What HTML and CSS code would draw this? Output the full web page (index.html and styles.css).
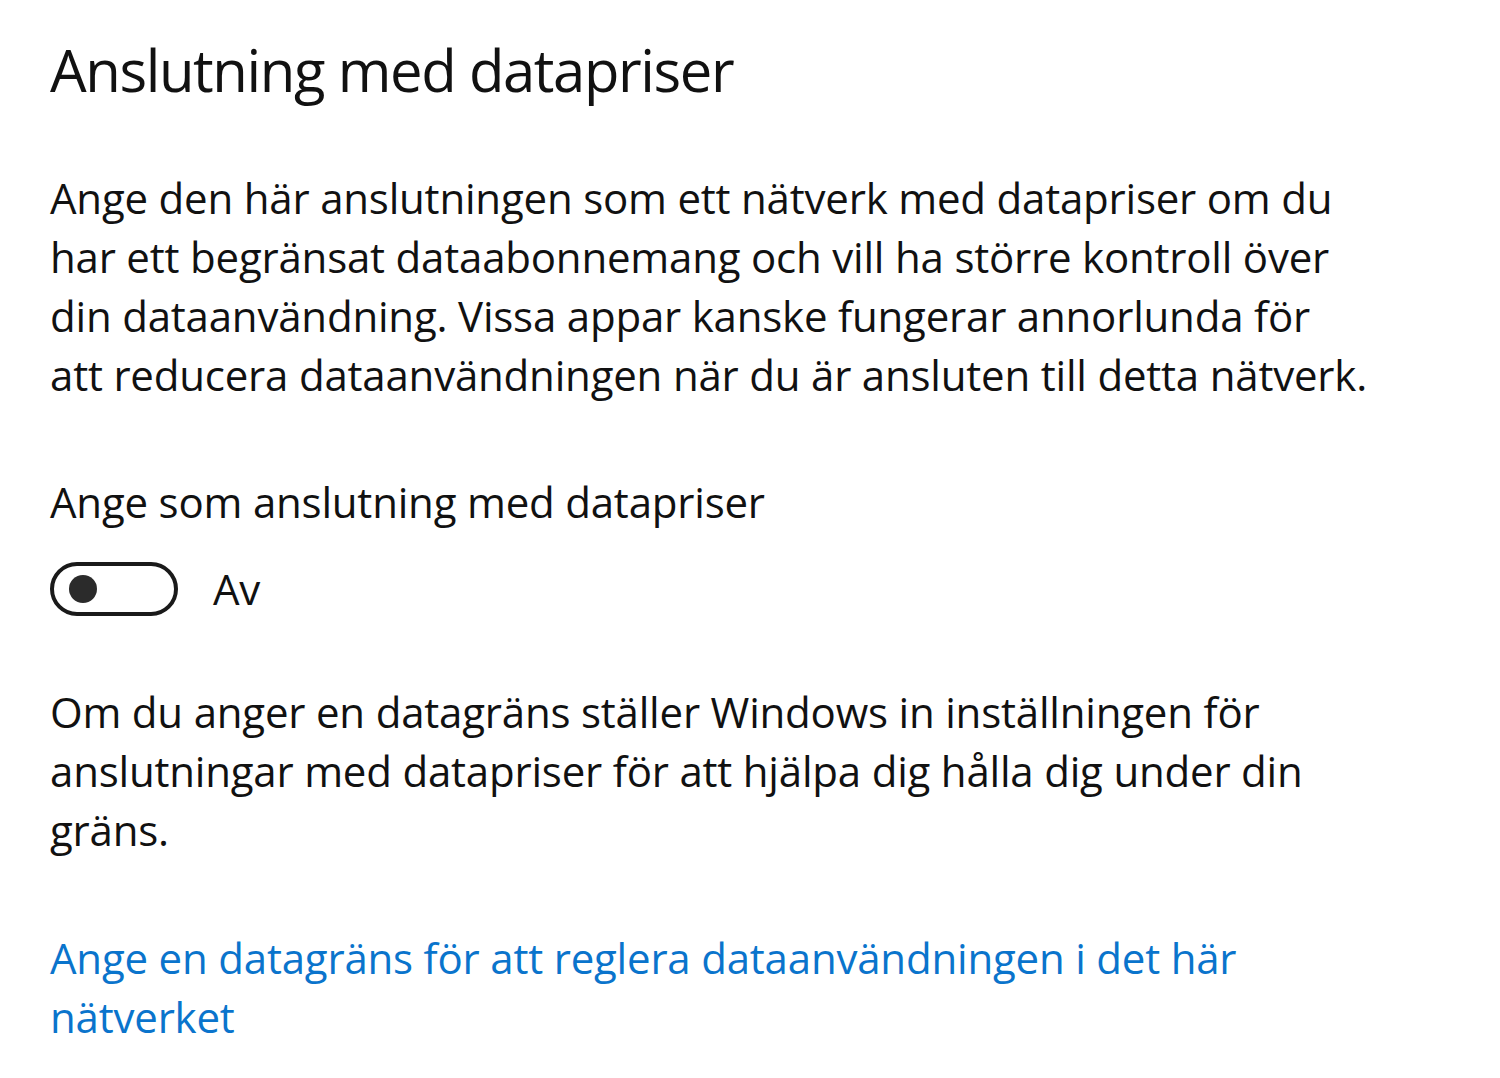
FILE: index.html
```html
<!DOCTYPE html>
<html lang="sv">
<head>
<meta charset="utf-8">
<title>Anslutning med datapriser</title>
<link rel="stylesheet" href="styles.css">
</head>
<body>
<main class="page">
  <h1 class="title">Anslutning med datapriser</h1>
  <p class="text intro">Ange den här anslutningen som ett nätverk med datapriser om du<br>har ett begränsat dataabonnemang och vill ha större kontroll över<br>din dataanvändning. Vissa appar kanske fungerar annorlunda för<br>att reducera dataanvändningen när du är ansluten till detta nätverk.</p>
  <div class="text label">Ange som anslutning med datapriser</div>
  <div class="toggle-row">
    <span class="toggle" role="switch" aria-checked="false"><span class="knob"></span></span>
    <span class="text state">Av</span>
  </div>
  <p class="text note">Om du anger en datagräns ställer Windows in inställningen för<br>anslutningar med datapriser för att hjälpa dig hålla dig under din<br>gräns.</p>
  <a class="text link" href="#">Ange en datagräns för att reglera dataanvändningen i det här<br>nätverket</a>
</main>
</body>
</html>
```

FILE: styles.css
```css
html, body {
  margin: 0;
  padding: 0;
  background: #ffffff;
}

.page {
  padding: 35px 0 0 50px;
  font-family: "Open Sans", "Noto Sans", sans-serif;
  color: #111111;
}

.title {
  margin: 0;
  font-size: 58px;
  line-height: 70px;
  font-weight: 400;
  letter-spacing: -1.4px;
}

.text {
  font-size: 42px;
  line-height: 59px;
  font-weight: 400;
  letter-spacing: -0.2px;
  white-space: nowrap;
}

.intro {
  margin: 63px 0 0;
}

.label {
  margin-top: 68px;
}

.toggle-row {
  display: flex;
  align-items: center;
  gap: 35px;
  margin-top: 31px;
  height: 54px;
}

.toggle {
  box-sizing: border-box;
  width: 128px;
  height: 54px;
  border: 4px solid #1a1a1a;
  border-radius: 27px;
  display: flex;
  align-items: center;
  padding-left: 15px;
}

.knob {
  width: 28px;
  height: 28px;
  border-radius: 50%;
  background: #2b2b2b;
}

.state {
  line-height: 54px;
}

.note {
  margin: 66px 0 0;
}

.link {
  display: block;
  margin-top: 69px;
  color: #0a74cc;
  text-decoration: none;
}
```
